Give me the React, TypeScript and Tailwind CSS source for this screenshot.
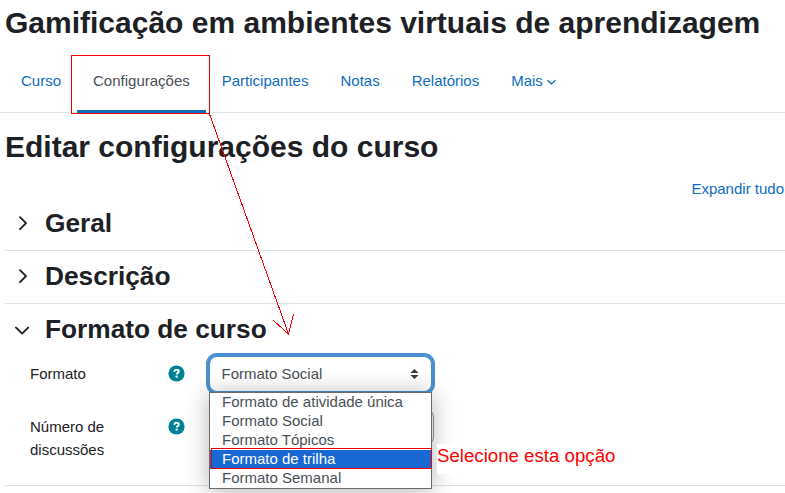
import type { ReactNode } from "react";

const options = [
  "Formato de atividade única",
  "Formato Social",
  "Formato Tópicos",
  "Formato de trilha",
  "Formato Semanal",
];

function Chevron({ open }: { open?: boolean }) {
  return (
    <span className="flex w-10 shrink-0 items-center pl-[9px]">
      <svg width="16" height="16" viewBox="0 0 16 16" fill="none" stroke="#1d2125" strokeWidth="1.9" strokeLinecap="round" strokeLinejoin="round">
        {open ? <path d="M2 6.6 8.1 12.6l6.1-6" /> : <path d="M6 2.2 12 8.2l-6 6" />}
      </svg>
    </span>
  );
}

function SectionTitle({ open, children }: { open?: boolean; children: ReactNode }) {
  return (
    <div className="flex h-[52px] items-center pb-0.5">
      <Chevron open={open} />
      <h3 className="text-[26.25px] leading-8 font-bold">{children}</h3>
    </div>
  );
}

function Help() {
  return (
    <svg className="mt-0.5 shrink-0" width="17" height="17" viewBox="0 0 17 17">
      <circle cx="8.5" cy="8.5" r="8.1" fill="#008196" />
      <path d="M6.1 6.7c.3-1.3 1.1-1.9 2.4-1.9 1.4 0 2.3.7 2.3 1.8 0 1.5-2.1 1.5-2.1 2.8" fill="none" stroke="#fff" strokeWidth="1.9" />
      <rect x="7.6" y="10.6" width="2.1" height="2" fill="#fff" />
    </svg>
  );
}

export default function App() {
  return (
    <div className="relative h-[493px] w-[785px] overflow-hidden bg-white font-['Liberation_Sans',Arial,sans-serif] text-[15px] leading-[22.5px] text-[#1d2125]">
      <h1 className="pl-[5px] text-[30px] leading-[46px] font-bold whitespace-nowrap">
        Gamificação em ambientes virtuais de aprendizagem
      </h1>
      <nav className="flex h-[67px] items-end border-b border-[#dee2e6] pl-[5px] text-[#0f6cbf]">
        <a className="flex h-[61px] items-center px-4 pb-px">Curso</a>
        <a className="-mb-px flex h-[61px] items-center border-b-3 border-[#0f6cbf] px-4 text-[#495057]">Configurações</a>
        <a className="flex h-[61px] items-center px-4 pb-px">Participantes</a>
        <a className="flex h-[61px] items-center px-4 pb-px">Notas</a>
        <a className="flex h-[61px] items-center px-4 pb-px">Relatórios</a>
        <a className="flex h-[61px] items-center gap-1 px-4 pb-px">
          Mais
          <svg className="mt-0.5" width="9" height="9" viewBox="0 0 9 9" fill="none" stroke="currentColor" strokeWidth="1.2" strokeLinecap="round" strokeLinejoin="round">
            <path d="M.9 2.5 4.5 6l3.6-3.5" />
          </svg>
        </a>
      </nav>
      <main className="pl-[5px]">
        <h2 className="pt-4 text-[30px] leading-9 font-bold">Editar configurações do curso</h2>
        <div className="flex h-[33px] items-end justify-end pt-[13px] pr-px text-[#0f6cbf]">
          <a className="h-5">Expandir tudo</a>
        </div>
        <section className="border-b border-[#dee2e6]"><SectionTitle>Geral</SectionTitle></section>
        <section className="border-b border-[#dee2e6]"><SectionTitle>Descrição</SectionTitle></section>
        <section className="h-[182px] border-b border-[#dee2e6]">
          <SectionTitle open>Formato de curso</SectionTitle>
          <div className="flex h-[53px] pl-[25px]">
            <label className="w-[138px] pt-[7px]">Formato</label>
            <div className="pt-[7px]"><Help /></div>
            <div className="relative ml-6 flex h-9 w-[223px] items-center justify-between rounded-lg border border-[#4790d1] bg-white pr-3 pl-[11.5px] text-[#495057] shadow-[0_0_0_3px_#4b91cf]">
              Formato Social
              <svg width="9" height="10" viewBox="0 0 9 10" fill="#343a40"><path d="M0.5 4 4.5 0 8.5 4zM0.5 6h8L4.5 10z" /></svg>
            </div>
          </div>
          <div className="flex pl-[25px]">
            <label className="w-[138px] pt-[7px] pr-8">Número de discussões</label>
            <div className="pt-[7px]"><Help /></div>
            <div className="ml-6 h-9 w-[225px] rounded-lg border border-[#8f959e]" />
          </div>
        </section>
      </main>

      <div className="absolute top-[392px] left-[209px] w-[223px] border border-[#6b6b6b] bg-white text-[#495057] shadow-[0_2px_22px_rgba(0,0,0,0.3)]">
        {options.map((option) => (
          <div key={option} className={option === "Formato de trilha" ? "h-[19px] bg-[#1967d2] pl-3 leading-[17px] text-white" : "h-[19px] pl-3 leading-[17px]"}>
            {option}
          </div>
        ))}
      </div>

      <div className="absolute top-[444px] left-[437px] h-[30px] bg-white text-[18.67px] leading-6 whitespace-nowrap text-[#ff0000]">
        Selecione esta opção
      </div>
      <svg className="absolute inset-0" width="785" height="493" fill="none" stroke="#f00000" strokeWidth="1" shapeRendering="crispEdges">
        <rect x="71.5" y="55.5" width="138" height="58" />
        <rect x="211.5" y="448.5" width="220" height="20" />
        <path d="M209.5 114 288.5 334M273 320l15.5 14 5-20" />
      </svg>
    </div>
  );
}
